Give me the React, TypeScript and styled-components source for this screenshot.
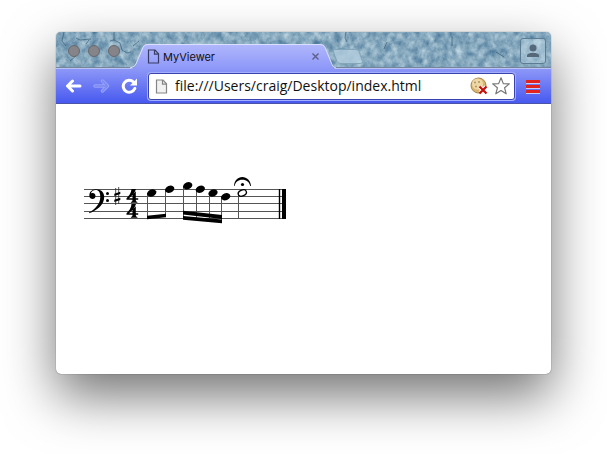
import React from "react";
import styled, { createGlobalStyle, css } from "styled-components";

const GlobalStyle = createGlobalStyle`
  * { box-sizing: border-box; }
  body { margin: 0; background: #fff; font-family: Inter, "Liberation Sans", sans-serif; }
`;

const Desktop = styled.div`
  min-height: 100vh;
  display: flex;
  padding: 32px 56px 80px;
  overflow: hidden;
`;

const Window = styled.main`
  flex: 1;
  display: flex;
  flex-direction: column;
  border-radius: 5px;
  background: #fff;
  box-shadow: 0 0 1px rgba(0, 0, 0, 0.7), 0 22px 52px rgba(0, 0, 0, 0.55);
`;

const TabStrip = styled.header`
  position: relative;
  display: flex;
  align-items: flex-end;
  height: 37px;
  border-radius: 5px 5px 0 0;
  overflow: hidden;
  background: #7ea5be;
`;

const Stone = styled.svg`
  position: absolute;
  inset: 0;
  width: 100%;
  height: 100%;
`;

const StripEdge = styled.div`
  position: absolute;
  left: 0;
  right: 0;
  bottom: 0;
  height: 2px;
  background: #b9c3f4;
  border-top: 1px solid #77859c;
`;

const Lights = styled.div`
  position: relative;
  display: flex;
  gap: 8px;
  padding: 0 10px 0 12px;
  align-self: flex-start;
  margin-top: 13px;
`;

const Light = styled.button`
  width: 12px;
  height: 12px;
  padding: 0;
  border: 1px solid #68686e;
  border-radius: 50%;
  background: #858488;
`;

const Tab = styled.div`
  position: relative;
  display: flex;
  align-items: center;
  gap: 3px;
  width: 206px;
  height: 25px;
  padding: 0 15px 0 17px;
  font-size: 11px;
  color: #111;
`;

const TabShape = styled.svg`
  position: absolute;
  inset: 0;
  width: 100%;
  height: 100%;
`;

const TabTitle = styled.span`
  position: relative;
  flex: 1;
`;

const iconButton = css`
  position: relative;
  display: flex;
  align-items: center;
  justify-content: center;
  padding: 0;
  border: 0;
  background: none;
`;

const IconButton = styled.button<{ $w: number }>`
  ${iconButton}
  width: ${(p) => p.$w}px;
  height: 22px;
`;

const NewTab = styled.button`
  ${iconButton}
  align-self: center;
  margin-top: 12px;
  margin-left: -4px;
`;

const Profile = styled.button`
  ${iconButton}
  align-self: center;
  width: 26px;
  height: 26px;
  margin: 1px 5px 0 auto;
  border: 1px solid #5c7c93;
  border-radius: 3px;
  background: rgba(205, 228, 240, 0.4);
`;

const Toolbar = styled.nav`
  display: flex;
  align-items: center;
  height: 35px;
  padding: 0 7px 0 3px;
  border-bottom: 1px solid #4a53a5;
  background: linear-gradient(#8d97f8, #4759ef);
`;

const AddressBar = styled.div`
  flex: 1;
  display: flex;
  align-items: center;
  height: 27px;
  margin: 0 7px 0 5px;
  padding: 0 2px 0 4px;
  border: 1px solid #3943b0;
  border-radius: 3px;
  background: #fff;
  box-shadow: 0 0 0 1px #a3aefc;
`;

const Address = styled.input`
  flex: 1;
  min-width: 0;
  margin-left: 5px;
  padding: 0;
  border: 0;
  outline: 0;
  background: none;
  color: #111;
  font: 14px/20px "Open Sans", "Liberation Sans", sans-serif;
`;

const Page = styled.section`
  flex: 1;
  padding: 66px 24px 0;
`;

const PageIcon = ({ grey = false }: { grey?: boolean }) => (
  <svg width="13" height="15" viewBox="0 0 13 15">
    <path
      d="M1.5 1H8l3.5 3.8V14h-10z"
      fill={grey ? "#f1f1f1" : "none"}
      stroke={grey ? "#858585" : "#3a3d63"}
      strokeWidth="1.2"
    />
    <path d="M7.5 1v4.2h4" fill="none" stroke={grey ? "#858585" : "#3a3d63"} strokeWidth="1.2" />
  </svg>
);

const noteHeads = [
  [71.7, 23], [89.7, 19.3], [107.7, 15.7], [120.3, 19.3], [133, 23], [145.7, 26.7],
];
const stems = [
  [67.5, 23, 48], [85.5, 20, 46], [103.5, 16, 49], [116.5, 20, 50], [129.5, 24, 51], [141.5, 27, 52], [158.5, 23, 48],
];

const Score = () => (
  <svg width="210" height="60" viewBox="0 0 210 60" role="img" aria-label="Bass clef melody">
    <g stroke="#555">
      {[19.5, 26.5, 33.5, 41.5, 48.5].map((y) => (
        <line key={y} x1="4" x2="206" y1={y} y2={y} />
      ))}
      {stems.map(([x, a, b]) => (
        <line key={x} x1={x} x2={x} y1={a} y2={b} />
      ))}
    </g>
    <path d="M199.5 19v30" stroke="#000" strokeWidth="1.4" />
    <path d="M202 19h4v30h-4z" />
    <path d="M9.500 26.800C8.500 22 12 19.200 16 19.200c5 0 8.200 3 8.200 7.800 0 8-7 13-14.900 16.200l-.3-.6C15 39 20.300 34 20.300 27c0-4.300-1.500-6.900-4.700-6.900-2.300 0-4.400 1.400-4.600 3.300.5-.3 1-.4 1.600-.4 1.700 0 2.900 1.200 2.900 2.900 0 1.800-1.300 3.100-3 3.100-1.500 0-2.700-.9-3-2.200z" />
    <circle cx="27.5" cy="23.5" r="1.5" />
    <circle cx="27.5" cy="30.5" r="1.5" />
    <path d="M35.700 18v17M38.700 17v17" stroke="#222" strokeWidth=".8" />
    <path d="M34.300 23.800l6-2v2.200l-6 2zM34.300 29.800l6-2V30l-6 2z" />
    <g id="four">
      <path d="M51.500 19h4.500c-1 4-4.500 7-7 9.300h3.500v-3.500l3.300-3.600v7.100h2.400v1.500h-2.400c0 1.500.4 1.900 1.600 2.200v.8h-6.500V32c1.200-.3 1.600-.7 1.600-2.200H46.500v-1.500c2.500-2.500 4.800-5.500 5-9.300z" />
    </g>
    <use href="#four" y="15" />
    {noteHeads.map(([x, y]) => (
      <ellipse key={x} cx={x} cy={y} rx="4.8" ry="3.5" transform={`rotate(-22 ${x} ${y})`} />
    ))}
    <path d="M67 45.800l19-2v3.500l-19 2z" />
    <path d="M103 40.800l39 4.300v3.800l-39-4.300zM103 46l39 3.500v3.800l-39-3.500z" />
    <ellipse cx="162.300" cy="23" rx="4.300" ry="2.900" fill="none" stroke="#000" strokeWidth="1.3" transform="rotate(-25 162.3 23)" />
    <path d="M154 16c.3-5.500 3.700-9 8.300-9s8.300 3.500 8.700 9h-.8c-.7-3.900-3.700-6.300-7.900-6.300s-7 2.400-7.700 6.300z" />
    <circle cx="162.5" cy="14.5" r="1.6" />
  </svg>
);

export default function App() {
  return (
    <>
      <GlobalStyle />
      <Desktop>
        <Window>
          <TabStrip>
            <Stone aria-hidden="true">
              <filter id="stone" x="0" y="0" width="100%" height="100%" colorInterpolationFilters="sRGB">
                <feTurbulence type="fractalNoise" baseFrequency="0.14 0.12" numOctaves="5" seed="21" />
                <feColorMatrix values="0.5 0.3 0 0 0.12  0.4 0.25 0 0 0.33  0.3 0.2 0 0 0.49  0 0 0 0 1" />
              </filter>
              <rect width="100%" height="100%" filter="url(#stone)" />
              <path
                d="M58 0v8l6 3 2 7 5 3 4-1M58 8l-4 1M35 7l-11 1-4-2M33 8l-3 4M8 0l-2 9 4 5M20 24l-6 5M83 9l-6 5M290 0l-1 6 2 4M331 10l-3 7M396 4v10M440 20l8 5"
                fill="none"
                stroke="#2c546e"
                strokeWidth="1"
                opacity=".6"
              />
            </Stone>
            <StripEdge />
            <Lights>
              <Light aria-label="Close window" />
              <Light aria-label="Minimise window" />
              <Light aria-label="Zoom window" />
            </Lights>
            <Tab>
              <TabShape viewBox="0 0 206 25" preserveAspectRatio="none" aria-hidden="true">
                <defs>
                  <linearGradient id="tab" x1="0" y1="0" x2="0" y2="1">
                    <stop offset="0" stopColor="#b1b8fc" />
                    <stop offset="1" stopColor="#8d97f8" />
                  </linearGradient>
                </defs>
                <path d="M0 25q5-1 6-4L13 3q1-3 4-3H190q4 0 5 3l7 18q1 3 4 4z" fill="url(#tab)" />
                <path d="M0 24q5-1 6-4L13 3.500q1-3 4-3H190q4 0 5 3l7 17q1 3 4 3.500" fill="none" stroke="#dadffd" />
              </TabShape>
              <IconButton as="span" $w={13}><PageIcon /></IconButton>
              <TabTitle>MyViewer</TabTitle>
              <IconButton $w={11} aria-label="Close tab">
                <svg width="9" height="9"><path d="M1.500 1.500l6 6M7.500 1.500l-6 6" stroke="#5d5f88" strokeWidth="1.4" /></svg>
              </IconButton>
            </Tab>
            <NewTab aria-label="New tab">
              <svg width="32" height="15"><path d="M3 .5H24q2 0 3 2l3.500 10q.5 2-2 2H9q-3 0-4-2L1.500 3Q1 .5 3 .5z" fill="#b5d0e0" fillOpacity=".8" stroke="#83a5ba" /></svg>
            </NewTab>
            <Profile aria-label="Profile">
              <svg width="14" height="14" fill="#56697a"><circle cx="7" cy="4" r="3.5" /><path d="M1 13v-1.500C1 9.500 5 8.700 7 8.700s6 .8 6 2.800V13z" /></svg>
            </Profile>
          </TabStrip>
          <Toolbar>
            <IconButton $w={28} aria-label="Back">
              <svg width="17" height="14" fill="none" stroke="#fff" strokeWidth="3" strokeLinecap="round" strokeLinejoin="round"><path d="M7.500 2L2.500 7l5 5M3 7h12" /></svg>
            </IconButton>
            <IconButton $w={28} aria-label="Forward" disabled>
              <svg width="17" height="14" fill="none" strokeLinecap="round" strokeLinejoin="round">
                <path d="M9.500 2l5 5-5 5M14 7H2" stroke="#98a3fa" strokeWidth="3.4" />
                <path d="M9.500 2l5 5-5 5M14 7H2" stroke="#7c89f6" strokeWidth="1.5" />
              </svg>
            </IconButton>
            <IconButton $w={28} aria-label="Reload">
              <svg width="17" height="16"><path d="M13.800 10.500A6 6 0 1 1 12.500 4" fill="none" stroke="#fff" strokeWidth="3" strokeLinecap="round" /><path d="M16 .5v7H9z" fill="#fff" /></svg>
            </IconButton>
            <AddressBar>
              <IconButton as="span" $w={17}><PageIcon grey /></IconButton>
              <Address aria-label="Address" defaultValue="file:///Users/craig/Desktop/index.html" />
              <IconButton $w={22} aria-label="Cookies blocked">
                <svg width="18" height="18"><circle cx="8.5" cy="8.5" r="7.5" fill="#d9b56f" stroke="#a98345" /><circle cx="7.5" cy="7" r="5.5" fill="#edd9a8" /><g fill="#b18b52"><circle cx="5" cy="5.5" r=".9" /><circle cx="9" cy="5" r=".9" /><circle cx="6" cy="9.5" r=".9" /></g><path d="M10 10l6 6M16 10l-6 6" stroke="#fff" strokeWidth="4" /><path d="M9.500 9.500l7 7M16.500 9.500l-7 7" stroke="#c80d0d" strokeWidth="2.2" /></svg>
              </IconButton>
              <IconButton $w={22} aria-label="Bookmark this page">
                <svg width="18" height="18"><path d="M9 .8l2.300 5.800 6 .3-4.700 3.900 1.600 6L9 13.500l-5.200 3.300 1.600-6L.7 6.900l6-.3z" fill="#fff" stroke="#777" strokeWidth="1.2" strokeLinejoin="round" /></svg>
              </IconButton>
            </AddressBar>
            <IconButton $w={22} aria-label="Menu">
              <svg width="14" height="15"><path d="M0 3h14M0 8h14M0 13h14" stroke="#dfe2ff" strokeWidth="4" opacity=".8" /><path d="M.5 2.500h13M.5 7.500h13M.5 12.500h13" stroke="#e3231d" strokeWidth="3" strokeLinecap="round" /></svg>
            </IconButton>
          </Toolbar>
          <Page><Score /></Page>
        </Window>
      </Desktop>
    </>
  );
}
